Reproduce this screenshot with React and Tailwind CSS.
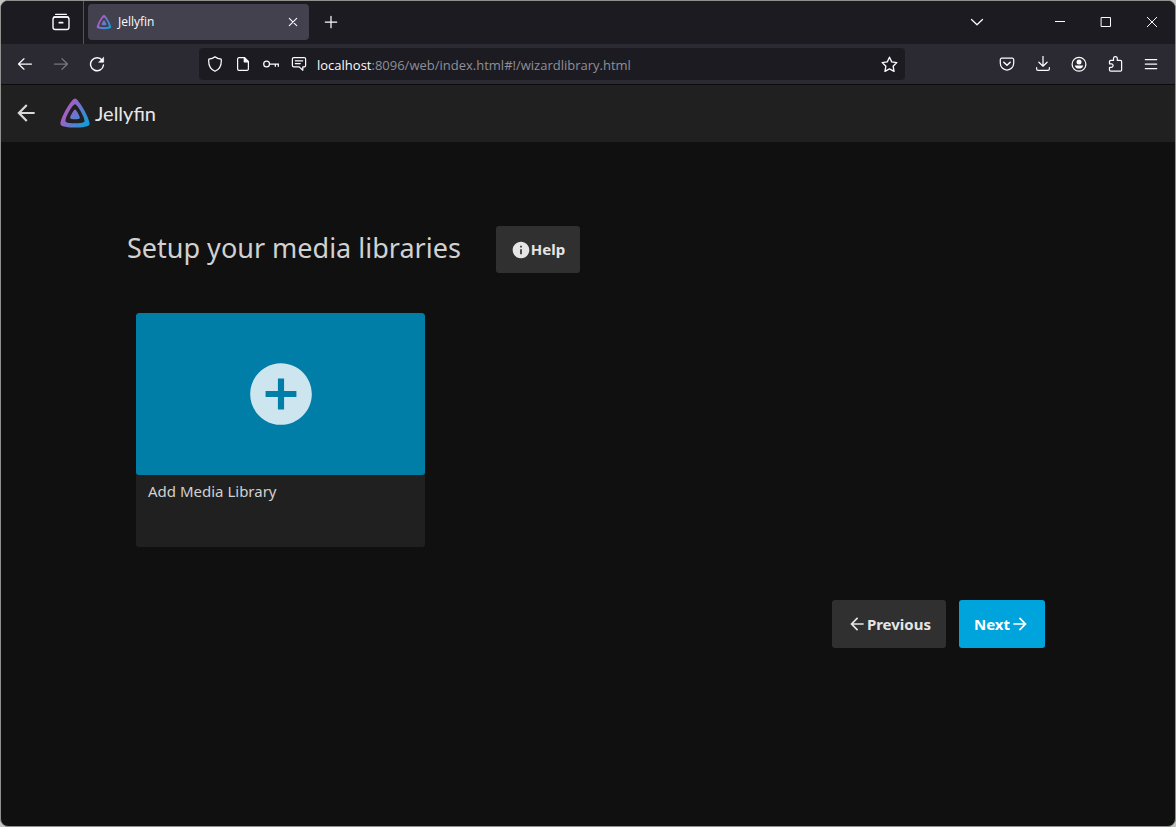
import React from "react";

function JellyfinMark({ id, className }) {
  return (
    <svg viewBox="0 0 512 512" className={className} aria-hidden="true">
      <defs>
        <linearGradient id={id} x1="110.25" y1="213.3" x2="496.14" y2="436.09" gradientUnits="userSpaceOnUse">
          <stop offset="0" stopColor="#aa5cc3" />
          <stop offset="1" stopColor="#00a4dc" />
        </linearGradient>
      </defs>
      <path
        fill={`url(#${id})`}
        d="M256,201.6c-20.4,0-86.2,119.3-76.2,139.4s142.5,19.9,152.4,0S276.5,201.6,256,201.6z"
      />
      <path
        fill={`url(#${id})`}
        fillRule="evenodd"
        d="M256,23.3C194.4,23.3-3.8,382.7,26.4,443.3s429.2,60,459.1,0S317.6,23.3,256,23.3z M406.5,390.8c-19.6,39.3-281.1,39.8-300.9,0s110.1-275.3,150.4-275.3S426.1,351.4,406.5,390.8z"
      />
    </svg>
  );
}

function Line({ children, className = "size-4", width = 1.25 }) {
  return (
    <svg
      viewBox="0 0 16 16"
      className={className}
      fill="none"
      stroke="currentColor"
      strokeWidth={width}
      strokeLinecap="round"
      strokeLinejoin="round"
      aria-hidden="true"
    >
      {children}
    </svg>
  );
}

function Material({ d, className }) {
  return (
    <svg viewBox="0 0 24 24" className={className} fill="currentColor" aria-hidden="true">
      <path d={d} />
    </svg>
  );
}

const ARROW_BACK = "M20 11H7.83l5.59-5.59L12 4l-8 8 8 8 1.41-1.41L7.83 13H20v-2z";
const ARROW_FORWARD = "M12 4l-1.41 1.41L16.17 11H4v2h12.17l-5.58 5.59L12 20l8-8z";
const INFO = "M12 2C6.48 2 2 6.48 2 12s4.48 10 10 10 10-4.48 10-10S17.52 2 12 2zm1 15h-2v-6h2v6zm0-8h-2V7h2v2z";
const ADD_CIRCLE = "M12 2C6.48 2 2 6.48 2 12s4.48 10 10 10 10-4.48 10-10S17.52 2 12 2zm5 11h-4v4h-2v-4H7v-2h4V7h2v4h4v2z";

function IconButton({ label, className = "w-9", children, ...rest }) {
  return (
    <button type="button" aria-label={label} className={`${className} flex h-8 shrink-0 items-center justify-center`} {...rest}>
      {children}
    </button>
  );
}

function TabStrip() {
  return (
    <div className="flex h-[43px] items-center bg-[#1c1b22] pb-px">
      <div className="flex h-[43px] w-[83px] shrink-0 items-center justify-end border-r border-[#55545c] pr-1">
        <IconButton label="Firefox View">
          <Line className="size-[18px]">
            <path d="M3.2 1.2h9.6M1.8 3.6h12.4" />
            <rect x="0.9" y="3.6" width="14.2" height="11" rx="2" />
            <path d="M6.5 8.6h3" strokeWidth="1.5" />
          </Line>
        </IconButton>
      </div>
      <div className="ml-1 flex h-9 w-[221px] items-center rounded bg-[#42414d] pr-1 pl-2">
        <JellyfinMark id="tab-mark" className="size-4 shrink-0" />
        <span className="ml-[6px] flex-1 text-xs">Jellyfin</span>
        <IconButton label="Close tab" className="w-6">
          <Line className="size-4" width={1.1}>
            <path d="M4.300 4.300l7.400 7.400M11.700 4.300l-7.400 7.400" />
          </Line>
        </IconButton>
      </div>
      <IconButton label="New tab" className="ml-1 w-9">
        <Line className="size-4">
          <path d="M8 2.3v11.4M2.3 8h11.4" />
        </Line>
      </IconButton>
      <div className="flex-1" />
      <IconButton label="List all tabs" className="mr-[42px] w-9">
        <Line className="size-4">
          <path d="M2.5 5.5L8 10.8l5.5-5.3" />
        </Line>
      </IconButton>
      <IconButton label="Minimize" className="w-[46px]">
        <Line width={1}>
          <path d="M3 7.5h10" strokeLinecap="butt" />
        </Line>
      </IconButton>
      <IconButton label="Maximize" className="w-[46px]">
        <Line width={1}>
          <path d="M3.5 3.5h9v9h-9z" strokeLinejoin="miter" />
        </Line>
      </IconButton>
      <IconButton label="Close" className="w-[46px]">
        <Line width={1}>
          <path d="M3 3l10 10M13 3L3 13" strokeLinecap="butt" />
        </Line>
      </IconButton>
    </div>
  );
}

function Toolbar() {
  return (
    <div className="flex h-[41px] items-center border-b border-[#0c0c0d] bg-[#2b2a33] px-[6px]">
      <IconButton label="Back">
        <Line>
          <path d="M14.5 8H1.5M7 2.8L1.5 8 7 13.2" />
        </Line>
      </IconButton>
      <IconButton label="Forward" className="w-9 text-[#77767d]" disabled>
        <Line>
          <path d="M1.5 8h13M9 2.8L14.5 8 9 13.2" />
        </Line>
      </IconButton>
      <IconButton label="Reload">
        <Line width={1.4}>
          <path d="M13.3 4.4A6.5 6.5 0 1 0 14.5 9" />
          <path d="M14.6 1.6v4.6H10z" fill="currentColor" strokeWidth="0.7" />
        </Line>
      </IconButton>
      <div className="mx-[84px] flex h-8 min-w-0 flex-1 items-center rounded bg-[#1c1b22] px-[2px]">
        <IconButton label="Tracking protection" className="w-7">
          <Line>
            <path d="M8 0.8C6.2 2.4 4 3 1.8 3.2 1.2 9 2.8 13 8 15.3 13.2 13 14.8 9 14.2 3.2 12 3 9.8 2.4 8 0.8z" />
          </Line>
        </IconButton>
        <IconButton label="Site information" className="w-7">
          <Line>
            <path d="M9.5 1.7H4a1.4 1.4 0 0 0-1.4 1.4v9.8A1.4 1.4 0 0 0 4 14.3h8a1.4 1.4 0 0 0 1.4-1.4V5.6z" />
            <path d="M9.3 1.7v4.1h4.1z" fill="currentColor" />
          </Line>
        </IconButton>
        <IconButton label="Saved logins" className="w-7">
          <Line>
            <circle cx="3.6" cy="8" r="2.9" />
            <path d="M6.5 8h9M15.3 8v2.3M12.3 8v2.3" />
          </Line>
        </IconButton>
        <IconButton label="Notifications" className="w-7">
          <Line>
            <path d="M2.8 1.5h10.4a1.4 1.4 0 0 1 1.4 1.4v6.600a1.4 1.4 0 0 1-1.4 1.4h-1.4v3.3L8.2 10.9H2.8a1.4 1.4 0 0 1-1.4-1.4V2.9a1.4 1.4 0 0 1 1.4-1.4z" />
            <path d="M4.3 4.8h7.4M4.3 7.6h5" />
          </Line>
        </IconButton>
        <button type="button" className="ml-1 min-w-0 flex-1 truncate pt-[3px] text-left text-[13px] text-[#8f8f97]">
          <span className="text-[#fbfbfe]">localhost</span>:8096/web/index.html#!/wizardlibrary.html
        </button>
        <IconButton label="Bookmark this page" className="w-7">
          <Line className="size-[17px]">
            <path d="M8 1.1l2.1 4.4 4.8.7-3.5 3.4.9 4.9L8 12.1l-4.3 2.4.9-4.9L1.1 6.2l4.8-.7z" />
          </Line>
        </IconButton>
      </div>
      <IconButton label="Save to Pocket">
        <Line>
          <path d="M2.8 2.2h10.4a1.5 1.5 0 0 1 1.5 1.5v3.6a6.7 6.7 0 0 1-13.4 0V3.7a1.5 1.5 0 0 1 1.5-1.5z" />
          <path d="M4.8 6.2L8 9.3l3.2-3.1" strokeWidth="1.5" />
        </Line>
      </IconButton>
      <IconButton label="Downloads">
        <Line>
          <path d="M8 .3v9.7M3.9 6.200L8 10.2l4.1-4M1.6 11.6v1.2a1.6 1.6 0 0 0 1.6 1.6h9.6a1.6 1.6 0 0 0 1.6-1.6v-1.2" />
        </Line>
      </IconButton>
      <IconButton label="Account">
        <Line>
          <circle cx="8" cy="8.2" r="6.9" />
          <circle cx="8" cy="6" r="2.5" fill="currentColor" stroke="none" />
          <path d="M3.8 9.4h8.4c-.5 2.1-2.2 3.2-4.2 3.2s-3.7-1.1-4.2-3.2z" fill="currentColor" stroke="none" />
        </Line>
      </IconButton>
      <IconButton label="Extensions">
        <Line>
          <path d="M3.700 4.400H6.500V2.500a1.900 1.900 0 0 1 3.800 0v1.900h3.100a1.200 1.200 0 0 1 1.200 1.200v8.400a1.200 1.200 0 0 1-1.200 1.200H3.700a1.200 1.200 0 0 1-1.200-1.200v-2.700h1.900a1.600 1.600 0 0 0 0-3.400H2.500V5.600a1.200 1.200 0 0 1 1.200-1.200z" />
        </Line>
      </IconButton>
      <IconButton label="Open application menu">
        <Line>
          <path d="M2.3 3.5h11.4M2.3 8h11.4M2.3 12.5h11.4" />
        </Line>
      </IconButton>
    </div>
  );
}

export default function App() {
  return (
    <div className="flex min-h-screen flex-col bg-[#c4c6c3]">
      <div className="flex flex-1 flex-col overflow-hidden rounded-lg border border-[#8e918e] bg-[#101010] font-['Open_Sans','Noto_Sans',sans-serif] text-[#fbfbfe]">
        <TabStrip />
        <Toolbar />
        <header className="flex h-[57px] items-center bg-[#202020] pb-px pl-3 text-[#d8d8d8]">
          <button type="button" aria-label="Back">
            <Material d={ARROW_BACK} className="size-[26px]" />
          </button>
          <a href="#home" className="ml-5 flex items-center gap-1">
            <JellyfinMark id="header-mark" className="size-8" />
            <span className="font-['Lato',sans-serif] text-xl leading-8 text-[#e8e8e8]">Jellyfin</span>
          </a>
        </header>
        <main className="px-[126px] pt-[84px] pb-12 font-['Noto_Sans','Open_Sans',sans-serif] text-[15px] text-[#d1d1d1]">
          <div className="flex items-center gap-[35px]">
            <h1 className="pb-[3px] text-[27px] leading-9">Setup your media libraries</h1>
            <button type="button" className="flex h-[47px] items-center rounded-[3px] bg-[#303030] px-[15px] font-bold text-[#e5e5e5]">
              <Material d={INFO} className="size-5" />
              Help
            </button>
          </div>
          <button
            type="button"
            className="mt-10 ml-[9px] flex h-[234px] w-[289px] flex-col overflow-hidden rounded-[3px] bg-[#202020] text-left"
          >
            <span className="flex h-[162px] w-full items-center justify-center rounded-[3px] bg-[#007ea8]">
              <Material d={ADD_CIRCLE} className="size-[74px] text-[#cce5ee]" />
            </span>
            <span className="px-3 pt-[5px]">Add Media Library</span>
          </button>
          <div className="mt-[53px] flex justify-end gap-[13px] pr-1 font-bold">
            <button type="button" className="flex h-12 items-center rounded-[3px] bg-[#303030] px-[15px] text-[#e5e5e5]">
              <Material d={ARROW_BACK} className="size-5" />
              Previous
            </button>
            <button type="button" className="flex h-12 items-center rounded-[3px] bg-[#00a4dc] px-[15px] text-white">
              Next
              <Material d={ARROW_FORWARD} className="size-5" />
            </button>
          </div>
        </main>
      </div>
    </div>
  );
}
